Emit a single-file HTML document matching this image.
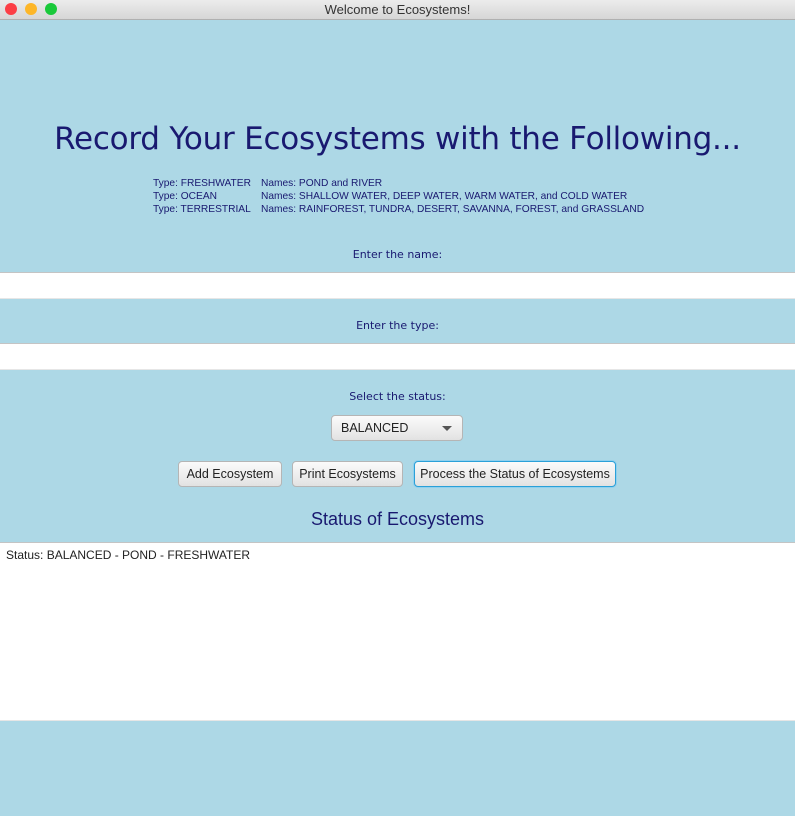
<!DOCTYPE html>
<html><head><style>
body{margin:0;width:795px;height:816px;background:#add8e6;font-family:"Liberation Sans",sans-serif;position:relative;overflow:hidden;color:#191970}
.abs{position:absolute}
.tb{left:0;top:0;width:795px;height:19px;background:linear-gradient(#ececec,#d6d6d6);border-bottom:1px solid #b0b0b0;text-align:center;font-size:13px;line-height:19px;color:#333}
.dot{top:3px;width:12px;height:12px;border-radius:50%}
.v{font-family:"DejaVu Sans",sans-serif}
.field{left:0;width:795px;background:#fff;border-top:1px solid #c4c4c4;border-bottom:1px solid #e6e6e6}
.btn{top:461px;height:26px;border:1px solid #b5b5b5;border-radius:4px;background:linear-gradient(#fbfbfb,#e2e2e2);font-size:12.5px;line-height:25px;text-align:center;color:#222;box-sizing:border-box;white-space:nowrap}
.sm{font-size:10.2px;line-height:13px;white-space:nowrap}
</style></head><body>
<div class="abs tb">Welcome to Ecosystems!</div>
<div class="abs dot" style="left:5px;background:#fc3e45"></div>
<div class="abs dot" style="left:25px;background:#fdb628"></div>
<div class="abs dot" style="left:45px;background:#19c93a"></div>
<div class="abs v" style="left:0;width:795px;top:121px;text-align:center;font-size:31px;white-space:nowrap;letter-spacing:-0.25px">Record Your Ecosystems with the Following...</div>
<div class="abs sm" style="left:153px;top:177px">Type: FRESHWATER<br>Type: OCEAN<br>Type: TERRESTRIAL</div>
<div class="abs sm" style="left:261px;top:177px">Names: POND and RIVER<br>Names: SHALLOW WATER, DEEP WATER, WARM WATER, and COLD WATER<br>Names: RAINFOREST, TUNDRA, DESERT, SAVANNA, FOREST, and GRASSLAND</div>
<div class="abs v" style="left:0;width:795px;top:248px;text-align:center;font-size:11px">Enter the name:</div>
<div class="abs field" style="top:272px;height:25px"></div>
<div class="abs v" style="left:0;width:795px;top:319px;text-align:center;font-size:11px">Enter the type:</div>
<div class="abs field" style="top:343px;height:25px"></div>
<div class="abs v" style="left:0;width:795px;top:390px;text-align:center;font-size:11px">Select the status:</div>
<div class="abs btn" style="left:331px;top:415px;width:132px;text-align:left;padding-left:9px">BALANCED<span style="position:absolute;right:10px;top:10px;border-left:5px solid transparent;border-right:5px solid transparent;border-top:5px solid #555"></span></div>
<div class="abs btn" style="left:178px;width:104px">Add Ecosystem</div>
<div class="abs btn" style="left:292px;width:111px">Print Ecosystems</div>
<div class="abs btn" style="left:414px;width:202px;border:1px solid #2aa0d8;box-shadow:0 0 0 1px #8fd0ee">Process the Status of Ecosystems</div>
<div class="abs" style="left:0;width:795px;top:509px;text-align:center;font-size:18px">Status of Ecosystems</div>
<div class="abs field" style="top:542px;height:177px"></div>
<div class="abs" style="left:6px;top:548px;font-size:12px;color:#222">Status: BALANCED - POND - FRESHWATER</div>
</body></html>
